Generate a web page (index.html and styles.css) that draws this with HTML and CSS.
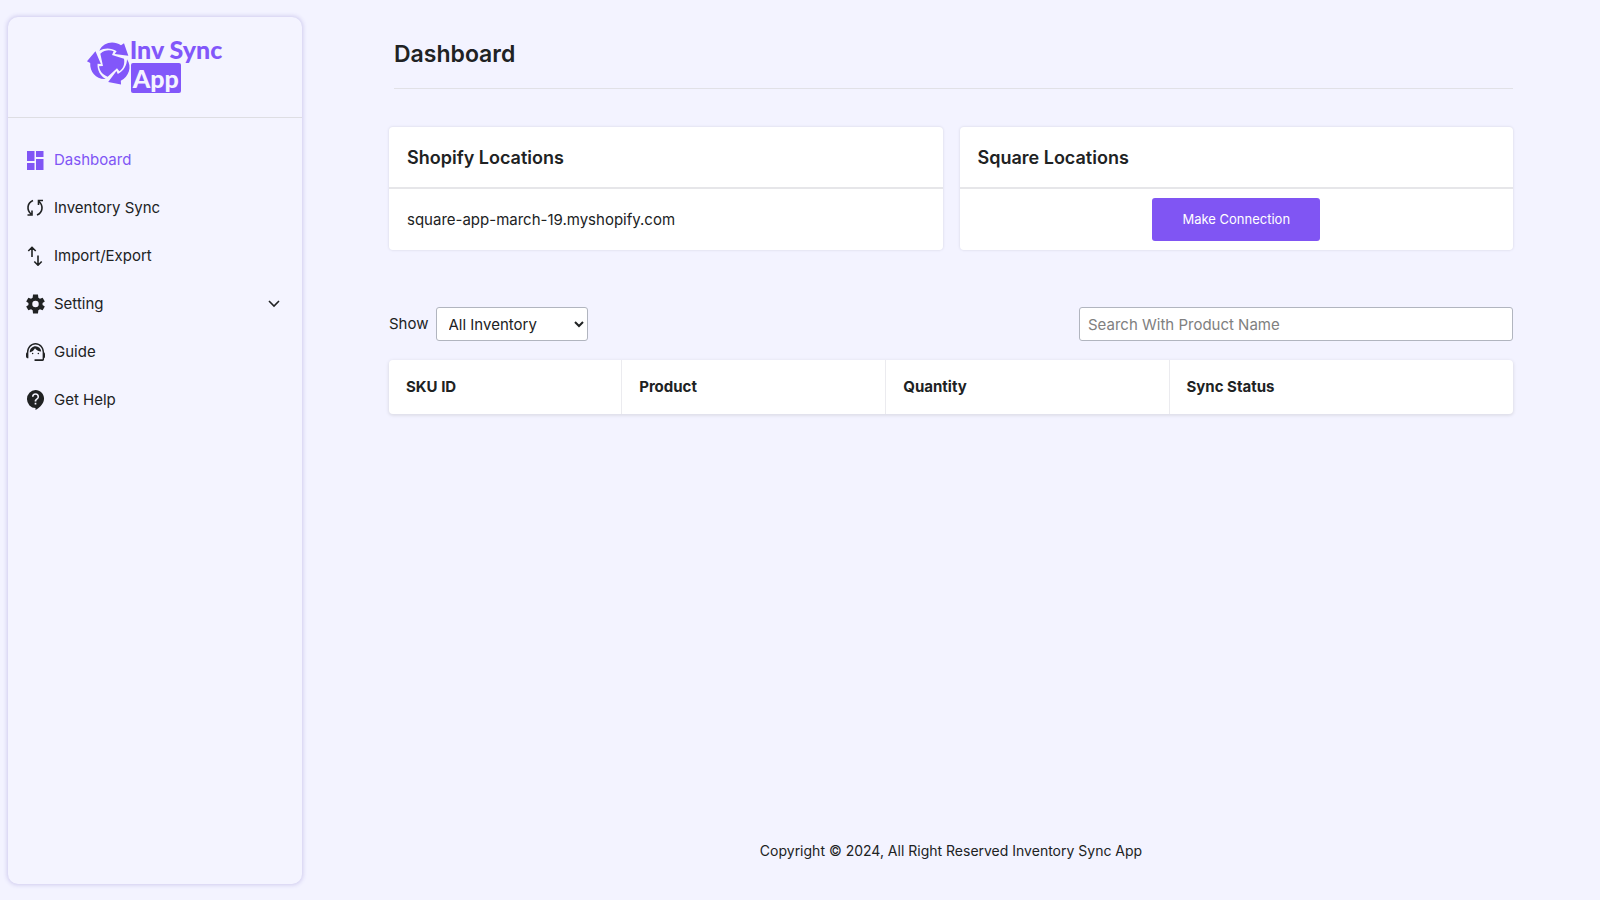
FILE: index.html
```html
<!DOCTYPE html>
<html lang="en">
<head>
<meta charset="utf-8">
<title>Inventory Sync App</title>
<link rel="stylesheet" href="styles.css">
</head>
<body>
<div class="app">
  <aside class="sidebar">
    <a class="brand" href="#" aria-label="Inv Sync App">
      <svg class="brand-mark" width="42" height="46" viewBox="0 0 126 138" aria-hidden="true">
        <defs><path id="blade" d="M34 29C46 4 76 -2 99 13L108 7L121 44L80 39L86 31C70 20 50 20 34 29Z"/></defs>
        <use href="#blade"/>
        <use href="#blade" transform="rotate(120 68 66)"/>
        <use href="#blade" transform="rotate(240 68 66)"/>
        <path d="M37 38C50 27 64 26 77 31L72 42L108 53C111 70 105 83 94 91L87 82L59 107C43 101 35 90 33 76L45 75Z"/>
      </svg>
      <span class="brand-name"><span class="brand-top">Inv Sync</span><span class="brand-tag">App</span></span>
    </a>
    <nav class="menu">
      <a class="menu-item active" href="#"><svg viewBox="0 0 19 20"><path d="M1 1h7.500v10H1zM10 1h7.500v6H10zM1 13h7.500v7H1zM10 9h7.500v11H10z"/></svg>Dashboard</a>
      <a class="menu-item" href="#"><svg class="line" viewBox="0 0 19 20"><path d="M7 2.500C1 5 .5 12 5 16M1.500 17H6v-4.500M11 17c6-2.500 6.500-9.500 2-13.500M17 2.500h-4.500V7"/></svg>Inventory Sync</a>
      <a class="menu-item" href="#"><svg class="line" viewBox="0 0 19 20"><path d="M6 11V1.500M2.300 5L6 1.300 9.700 5M12 9.500v9.500M8.300 15.500L12 19.200l3.700-3.700"/></svg>Import/Export</a>
      <a class="menu-item" href="#"><svg viewBox="2 2 20 20"><path d="M19.400 13a7.500 7.500 0 0 0 0-2l2.400-1.700-2.300-4-2.800 1.200a7 7 0 0 0-1.700-1L14.600 2H9.400L9 5.500a7 7 0 0 0-1.700 1L4.500 5.300l-2.300 4L4.600 11a7.500 7.500 0 0 0 0 2l-2.400 1.700 2.300 4 2.800-1.200a7 7 0 0 0 1.700 1l.4 3.500h5.200l.4-3.500a7 7 0 0 0 1.700-1l2.800 1.200 2.300-4zM12 15.400a3.400 3.400 0 1 1 0-6.800 3.400 3.400 0 0 1 0 6.800z"/></svg>Setting<svg class="chevron" viewBox="0 0 12 12"><path d="M1 3l5 5 5-5"/></svg></a>
      <a class="menu-item" href="#"><svg viewBox="2 2 20 20"><path d="M21 12.200C21 6.500 16.700 2.500 12 2.500c-4.600 0-9 3.900-9 9.800-.6.300-1 1-1 1.700v2.500c0 1.100.6 2 1.500 2h1V12a7.500 7.800 0 0 1 15 0v7.700H11v1.800h8.500a1.500 1.500 0 0 0 1.500-1.500v-1.500c.6-.3 1-.9 1-1.600V14c0-.8-.4-1.500-1-1.800z"/><circle cx="9" cy="13.500" r=".8"/><circle cx="15" cy="13.500" r=".8"/><path d="M18 11.500A6 6 0 0 0 12.100 6C9 6 5.700 8.500 6 12.500a8.100 8.100 0 0 0 5.500-4.500c1.300 2 3.500 3.500 6.500 3.500z"/></svg>Guide</a>
      <a class="menu-item" href="#"><svg viewBox="2 2 20 21"><path fill-rule="evenodd" d="M12 2a9 9.500 0 0 0 0 19v2c5-2.500 9-7 9-12 0-5-4-9-9-9zm.9 15.300h-1.800v-1.800h1.800zm0-3.200h-1.800c0-3.200 3-3 3-5.100a2.100 2.100 0 0 0-4.200 0H8.300a3.700 3.700 0 0 1 7.400 0c0 2.500-2.800 2.600-2.800 5.100z"/></svg>Get Help</a>
    </nav>
  </aside>
  <div class="page">
    <main>
      <h1>Dashboard</h1>
      <div class="cards">
        <section class="card">
          <h2>Shopify Locations</h2>
          <div class="card-body">square-app-march-19.myshopify.com</div>
        </section>
        <section class="card">
          <h2>Square Locations</h2>
          <div class="card-body centered"><button type="button">Make Connection</button></div>
        </section>
      </div>
      <div class="toolbar">
        <label class="show" for="filter">Show</label>
        <select id="filter"><option>All Inventory</option></select>
        <input type="search" placeholder="Search With Product Name" aria-label="Search With Product Name">
      </div>
      <div class="table-wrap">
        <table>
          <thead><tr><th class="c-sku">SKU ID</th><th class="c-product">Product</th><th class="c-qty">Quantity</th><th>Sync Status</th></tr></thead>
        </table>
      </div>
    </main>
    <footer>Copyright © 2024, All Right Reserved Inventory Sync App</footer>
  </div>
</div>
</body>
</html>
```
FILE: styles.css
```css
* { box-sizing: border-box; }
body {
  margin: 0;
  background: #f3f3ff;
  color: #202223;
  font: 400 15px/24px Inter, "Noto Sans", sans-serif;
}
.app { display: flex; min-height: 100vh; }
.sidebar {
  flex: 0 0 294px;
  margin: 17px 0 16px 8px;
  background: #f4f4ff;
  border-radius: 10px;
  box-shadow: 0 0 4px 1px #cfcbee;
}
.brand {
  display: flex;
  justify-content: center;
  height: 101px;
  padding-top: 21px;
  border-bottom: 1px solid #dedee3;
  color: #8257fa;
  text-decoration: none;
}
.brand-mark { fill: currentColor; margin-top: 3px; overflow: visible; }
.brand-name {
  display: flex;
  flex-direction: column;
  align-items: flex-start;
  font: 900 25px/22px Lato, sans-serif;
}
.brand-tag {
  margin: 3px 0 0 1px;
  padding: 0 2px;
  border-radius: 2px;
  background: #8257fa;
  color: #f4f4ff;
  line-height: 30px;
}
.menu { padding-top: 18px; }
.menu-item {
  display: flex;
  align-items: center;
  gap: 9px;
  height: 48px;
  padding: 0 22px 0 18px;
  color: #202223;
  text-decoration: none;
}
.menu-item svg { width: 19px; height: 20px; fill: currentColor; }
.menu-item .line, .menu-item .chevron { fill: none; stroke: currentColor; stroke-width: 1.6; }
.menu-item .chevron { width: 12px; height: 12px; margin-left: auto; }
.menu-item.active { color: #8055f5; }
.page { flex: 1; display: flex; flex-direction: column; }
main { padding: 0 87px; }
h1 {
  margin: 0 0 38px 5px;
  padding: 37px 0 16px;
  border-bottom: 1px solid #e1e1e6;
  font-size: 23px;
  line-height: 35px;
  font-weight: 600;
}
.cards { display: grid; grid-template-columns: 1fr 1fr; gap: 17px; }
.card {
  background: #fff;
  border-radius: 4px;
  box-shadow: 0 0 2px 1px #e4e4f2;
}
h2 {
  margin: 0;
  padding: 17px 18px 15px;
  border-bottom: 2px solid #e6e6e9;
  font-size: 18px;
  line-height: 28px;
  font-weight: 600;
}
.card-body { display: flex; align-items: center; min-height: 61px; padding: 9px 18px; }
.centered { justify-content: center; }
button {
  padding: 10px 30px;
  border: 0;
  border-radius: 3px;
  background: #8055f3;
  color: #fff;
  font: inherit;
  font-size: 13px;
  line-height: 23px;
}
.toolbar { display: flex; align-items: center; margin: 57px 0 19px; }
.show { margin-right: 7px; }
select, input {
  height: 34px;
  border: 1px solid #b1b5bf;
  border-radius: 3px;
  background: #fff;
  color: #202223;
  font: inherit;
}
select { width: 152px; padding: 0 0 0 8px; }
input { width: 434px; margin-left: auto; padding: 0 8px; }
input::placeholder { color: #808080; }
.table-wrap {
  overflow: hidden;
  border-radius: 4px;
  background: #fff;
  box-shadow: 0 1px 3px 1px #dfdfea;
}
table { width: 100%; border-collapse: collapse; table-layout: fixed; }
th { padding: 15px 17px; border-right: 1px solid #ebebef; text-align: left; font-weight: 700; }
th:last-child { border-right: 0; }
.c-sku { width: 20.700%; }
.c-product { width: 23.500%; }
.c-qty { width: 25.200%; }
footer { margin-top: auto; padding: 0 0 37px; text-align: center; font-size: 14px; }
```
